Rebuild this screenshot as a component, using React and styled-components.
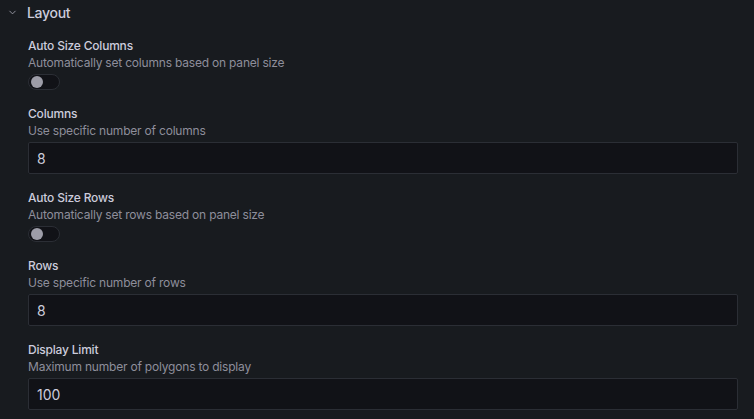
import styled, { createGlobalStyle } from "styled-components";

const GlobalStyle = createGlobalStyle`
  * { box-sizing: border-box; }
  html, body {
    margin: 0;
    padding: 0;
    background: #181b1f;
  }
  body {
    font-family: Inter, "Noto Sans", sans-serif;
    color: #ccccdc;
  }
`;

const fields = [
  { type: "switch", label: "Auto Size Columns", description: "Automatically set columns based on panel size" },
  { type: "input", label: "Columns", description: "Use specific number of columns", value: "8" },
  { type: "switch", label: "Auto Size Rows", description: "Automatically set rows based on panel size" },
  { type: "input", label: "Rows", description: "Use specific number of rows", value: "8" },
  { type: "input", label: "Display Limit", description: "Maximum number of polygons to display", value: "100" },
];

const App = () => {
  return (
    <>
      <GlobalStyle />
      <Section>
        <Header>
          <Chevron viewBox="0 0 24 24">
            <path d="M6 9l6 6 6-6" />
          </Chevron>
          <Title>Layout</Title>
        </Header>
        <Body>
          {fields.map((f) => (
            <Field key={f.label}>
              <Label>{f.label}</Label>
              <Description>{f.description}</Description>
              {f.type === "switch" ? (
                <Switch>
                  <Knob />
                </Switch>
              ) : (
                <Input readOnly value={f.value} />
              )}
            </Field>
          ))}
        </Body>
      </Section>
    </>
  );
};

const Section = styled.div`
  width: 754px;
  height: 419px;
  overflow: hidden;
  background: #181b1f;
`;

const Header = styled.div`
  display: flex;
  align-items: center;
  height: 24px;
  padding-left: 7px;
  gap: 9px;
`;

const Chevron = styled.svg`
  width: 11px;
  height: 11px;
  fill: none;
  stroke: #9a9aa6;
  stroke-width: 2;
  stroke-linecap: round;
  stroke-linejoin: round;
`;

const Title = styled.div`
  font-size: 14px;
  font-weight: 500;
  letter-spacing: -0.3px;
  color: #ccccdc;
`;

const Body = styled.div`
  padding: 14px 16px 0 28px;
`;

const Field = styled.div`
  margin-bottom: 16px;
`;

const Label = styled.div`
  font-size: 12px;
  font-weight: 500;
  line-height: 16px;
  letter-spacing: -0.2px;
  color: #ccccdc;
`;

const Description = styled.div`
  font-size: 12px;
  font-weight: 400;
  line-height: 17px;
  letter-spacing: -0.2px;
  color: #8e8e9b;
`;

const Input = styled.input`
  display: block;
  width: 100%;
  height: 32px;
  margin-top: 3px;
  padding: 0 8px;
  background: #111217;
  border: 1px solid #2b2e35;
  border-radius: 2px;
  color: #ccccdc;
  font-family: Inter, "Noto Sans", sans-serif;
  font-size: 14px;
  outline: none;
`;

const Switch = styled.div`
  position: relative;
  width: 32px;
  height: 16px;
  margin-top: 3px;
  border-radius: 8px;
  background: #111217;
  border: 1px solid #2b2e35;
`;

const Knob = styled.div`
  position: absolute;
  top: 1px;
  left: 2px;
  width: 12px;
  height: 12px;
  border-radius: 50%;
  background: #9d9da8;
`;

export default App;
